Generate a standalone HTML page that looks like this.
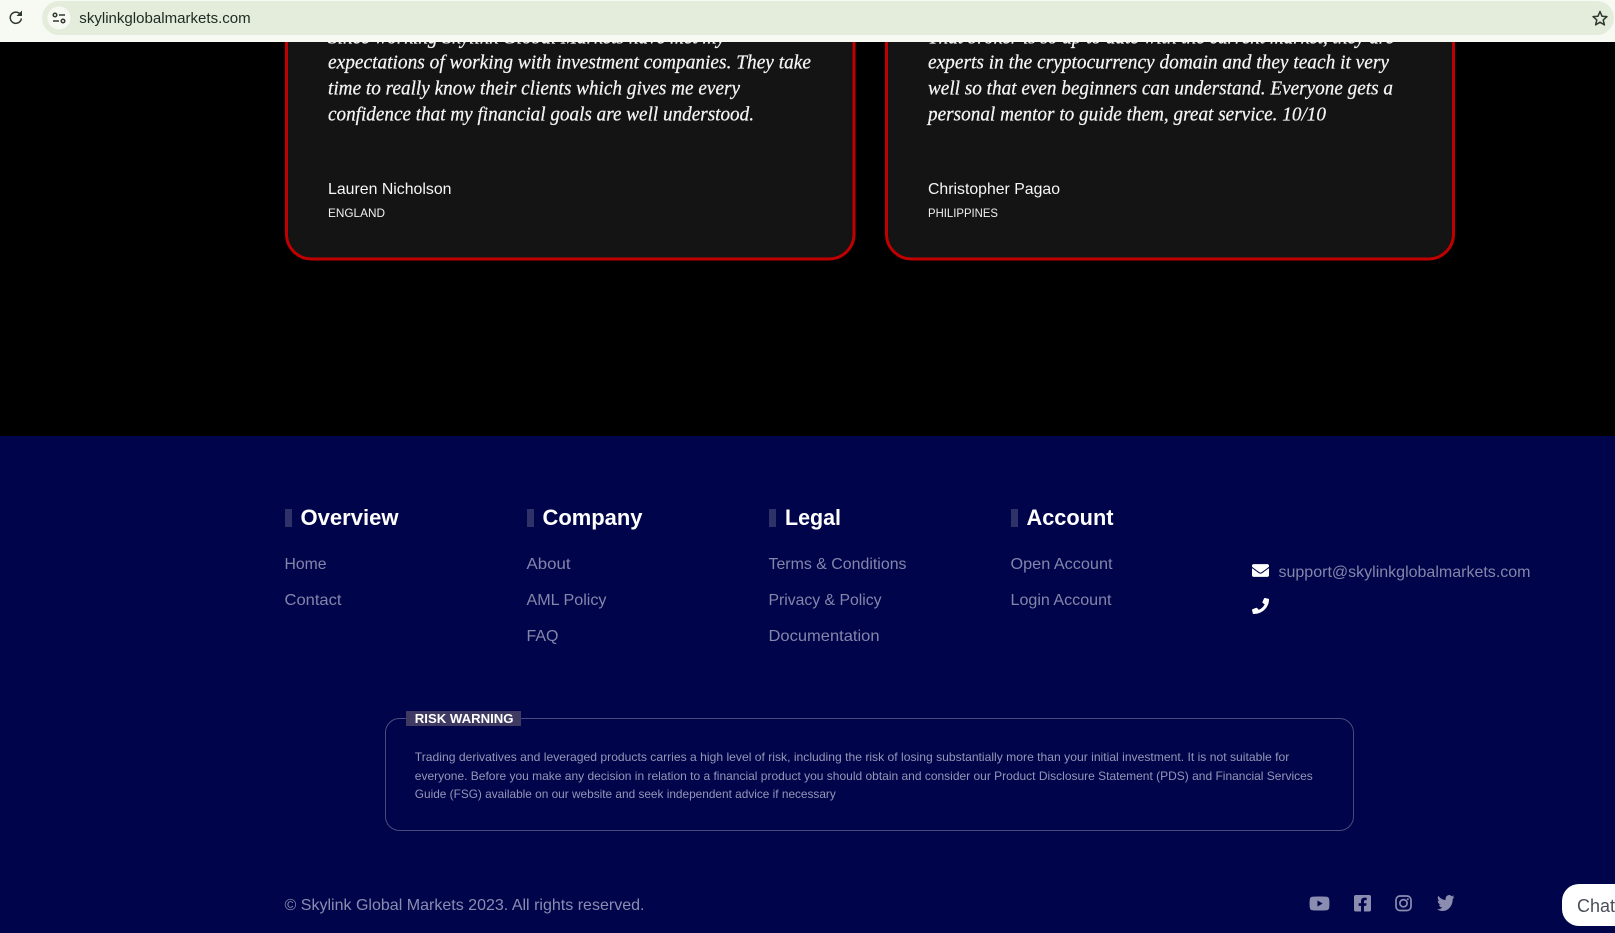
<!DOCTYPE html>
<html lang="en"><head><meta charset="utf-8"><title>Skylink Global Markets</title>
<style>
html,body{margin:0;padding:0;width:1615px;height:933px;overflow:hidden;background:#000}
svg.page{position:absolute;left:0;top:0;display:block}
text{font-family:"Liberation Sans",sans-serif}
.q{font-family:"Liberation Serif",serif;font-style:italic;font-size:20.5px;fill:#f4f4f4;stroke:#f4f4f4;stroke-width:.25px}
.n{font-size:16px;fill:#f6f6f6}
.c{font-size:12px;fill:#f0f0f0}
.h{font-size:22px;font-weight:700;fill:#fff}
.l{font-size:16px;fill:#8485aa}
.r{font-size:12px;fill:#9596b6}
</style></head><body>
<svg class="page" width="1615" height="933" viewBox="0 0 1615 933" xmlns="http://www.w3.org/2000/svg">
<rect width="1615" height="933" fill="#000"/>
<!-- testimonial cards -->
<rect x="286.5" y="-60" width="567.5" height="319" rx="25" fill="#141414" stroke="#c00000" stroke-width="3"/>
<rect x="886.5" y="-60" width="567" height="319" rx="25" fill="#141414" stroke="#c00000" stroke-width="3"/>
<g class="qs">
<text class="q" x="328" y="43.5" textLength="397" lengthAdjust="spacingAndGlyphs">Since working Skylink Global Markets have met my</text>
<text class="q" x="328" y="68.7" textLength="483" lengthAdjust="spacingAndGlyphs">expectations of working with investment companies. They take</text>
<text class="q" x="328" y="94.7" textLength="412" lengthAdjust="spacingAndGlyphs">time to really know their clients which gives me every</text>
<text class="q" x="328" y="120.7" textLength="426" lengthAdjust="spacingAndGlyphs">confidence that my financial goals are well understood.</text>
<text class="q" x="928" y="43.5" textLength="466" lengthAdjust="spacingAndGlyphs">That broker is so up to date with the current market, they are</text>
<text class="q" x="928" y="68.7" textLength="461" lengthAdjust="spacingAndGlyphs">experts in the cryptocurrency domain and they teach it very</text>
<text class="q" x="928" y="94.7" textLength="465" lengthAdjust="spacingAndGlyphs">well so that even beginners can understand. Everyone gets a</text>
<text class="q" x="928" y="120.7" textLength="398" lengthAdjust="spacingAndGlyphs">personal mentor to guide them, great service. 10/10</text>
</g>
<text class="n" x="328" y="194" textLength="123.5" lengthAdjust="spacingAndGlyphs">Lauren Nicholson</text>
<text class="c" x="328" y="217" textLength="57" lengthAdjust="spacingAndGlyphs">ENGLAND</text>
<text class="n" x="928" y="194" textLength="132" lengthAdjust="spacingAndGlyphs">Christopher Pagao</text>
<text class="c" x="928" y="217" textLength="70" lengthAdjust="spacingAndGlyphs">PHILIPPINES</text>

<!-- footer -->
<rect x="0" y="436" width="1615" height="497" fill="#00044a"/>
<g fill="#2e3268">
<rect x="285" y="509" width="7" height="18"/><rect x="527" y="509" width="7" height="18"/>
<rect x="769" y="509" width="7" height="18"/><rect x="1011" y="509" width="7" height="18"/>
</g>
<text class="h" x="300.5" y="525" textLength="98" lengthAdjust="spacingAndGlyphs">Overview</text>
<text class="h" x="542.5" y="525" textLength="100" lengthAdjust="spacingAndGlyphs">Company</text>
<text class="h" x="785" y="525" textLength="56" lengthAdjust="spacingAndGlyphs">Legal</text>
<text class="h" x="1026.5" y="525" textLength="87" lengthAdjust="spacingAndGlyphs">Account</text>

<text class="l" x="284.5" y="569" textLength="42" lengthAdjust="spacingAndGlyphs">Home</text>
<text class="l" x="284.5" y="605" textLength="57" lengthAdjust="spacingAndGlyphs">Contact</text>
<text class="l" x="526.5" y="569" textLength="44" lengthAdjust="spacingAndGlyphs">About</text>
<text class="l" x="526.5" y="605" textLength="80" lengthAdjust="spacingAndGlyphs">AML Policy</text>
<text class="l" x="526.5" y="641" textLength="32" lengthAdjust="spacingAndGlyphs">FAQ</text>
<text class="l" x="768.5" y="569" textLength="138" lengthAdjust="spacingAndGlyphs">Terms &amp; Conditions</text>
<text class="l" x="768.5" y="605" textLength="113" lengthAdjust="spacingAndGlyphs">Privacy &amp; Policy</text>
<text class="l" x="768.5" y="641" textLength="111" lengthAdjust="spacingAndGlyphs">Documentation</text>
<text class="l" x="1010.5" y="569" textLength="102" lengthAdjust="spacingAndGlyphs">Open Account</text>
<text class="l" x="1010.5" y="605" textLength="101" lengthAdjust="spacingAndGlyphs">Login Account</text>
<text class="l" x="1278.5" y="577" textLength="252" lengthAdjust="spacingAndGlyphs">support@skylinkglobalmarkets.com</text>

<svg x="1252" y="562" width="17" height="17" viewBox="0 0 512 512"><path fill="#fff" d="M502.3 190.8c3.9-3.1 9.7-.2 9.7 4.7V400c0 26.5-21.5 48-48 48H48c-26.5 0-48-21.5-48-48V195.6c0-5 5.7-7.8 9.7-4.7 22.4 17.4 52.1 39.5 154.1 113.6 21.1 15.4 56.7 47.8 92.2 47.6 35.7.3 72-32.8 92.3-47.6 102-74.1 131.6-96.3 154-113.7zM256 320c23.2.4 56.6-29.2 73.4-41.4 132.7-96.3 142.8-104.7 173.4-128.7 5.8-4.5 9.2-11.5 9.2-18.9v-19c0-26.5-21.5-48-48-48H48C21.5 64 0 85.5 0 112v19c0 7.4 3.4 14.3 9.2 18.9 30.6 23.9 40.7 32.4 173.4 128.7 16.8 12.2 50.2 41.8 73.4 41.4z"/></svg>
<svg x="1252" y="598" width="17" height="16" viewBox="0 0 512 512" preserveAspectRatio="none"><path fill="#fff" d="M493.4 24.6l-104-24c-11.3-2.6-22.9 3.3-27.5 13.9l-48 112c-4.2 9.8-1.4 21.3 6.9 28l60.6 49.6c-36 76.7-98.9 140.5-177.2 177.2l-49.6-60.6c-6.8-8.3-18.2-11.1-28-6.9l-112 48C3.9 366.5-2 378.1.6 389.4l24 104C27.1 504.2 36.7 512 48 512c256.1 0 464-207.5 464-464 0-11.2-7.7-20.9-18.6-23.4z"/></svg>

<!-- risk warning -->
<rect x="385.5" y="718.5" width="968" height="112" rx="14" fill="none" stroke="#4a4b7c" stroke-width="1"/>
<rect x="406" y="711" width="115" height="15" fill="#3f3a62"/>
<text x="414.8" y="723" font-size="13" font-weight="700" fill="#fff" textLength="98.7" lengthAdjust="spacingAndGlyphs">RISK WARNING</text>
<text class="r" x="414.8" y="761" textLength="874.5" lengthAdjust="spacingAndGlyphs">Trading derivatives and leveraged products carries a high level of risk, including the risk of losing substantially more than your initial investment. It is not suitable for</text>
<text class="r" x="414.8" y="780" textLength="898" lengthAdjust="spacingAndGlyphs">everyone. Before you make any decision in relation to a financial product you should obtain and consider our Product Disclosure Statement (PDS) and Financial Services</text>
<text class="r" x="414.8" y="798" textLength="421" lengthAdjust="spacingAndGlyphs">Guide (FSG) available on our website and seek independent advice if necessary</text>

<!-- bottom bar -->
<text class="l" x="284.5" y="910" textLength="360" lengthAdjust="spacingAndGlyphs" style="fill:#8a8cb0">© Skylink Global Markets 2023. All rights reserved.</text>
<svg x="1309" y="893.5" width="21" height="20" viewBox="0 0 576 512" preserveAspectRatio="xMidYMid meet"><path fill="#8b8db0" d="M549.655 124.083c-6.281-23.65-24.787-42.276-48.284-48.597C458.781 64 288 64 288 64S117.22 64 74.629 75.486c-23.497 6.322-42.003 24.947-48.284 48.597-11.412 42.867-11.412 132.305-11.412 132.305s0 89.438 11.412 132.305c6.281 23.65 24.787 41.5 48.284 47.821C117.22 448 288 448 288 448s170.78 0 213.371-11.486c23.497-6.321 42.003-24.171 48.284-47.821 11.412-42.867 11.412-132.305 11.412-132.305s0-89.438-11.412-132.305zm-317.51 213.508V175.185l142.739 81.205-142.739 81.201z"/></svg>
<svg x="1354" y="895" width="17" height="16.5" viewBox="0 32 448 448" preserveAspectRatio="none"><path fill="#8b8db0" d="M400 32H48A48 48 0 0 0 0 80v352a48 48 0 0 0 48 48h137.25V327.69h-63V256h63v-54.64c0-62.15 37-96.48 93.67-96.48 27.14 0 55.52 4.84 55.52 4.84v61h-31.27c-30.81 0-40.42 19.12-40.42 38.73V256h68.78l-11 71.69h-57.78V480H400a48 48 0 0 0 48-48V80a48 48 0 0 0-48-48z"/></svg>
<g fill="none" stroke="#8b8db0" stroke-width="1.7">
<rect x="1396" y="896" width="15" height="14.5" rx="4"/>
<circle cx="1403.5" cy="903.2" r="3.6"/>
</g>
<circle cx="1407.8" cy="899.2" r="1" fill="#8b8db0"/>
<svg x="1437" y="895" width="17.5" height="16" viewBox="0 48 512 416" preserveAspectRatio="none"><path fill="#8b8db0" d="M459.37 151.716c.325 4.548.325 9.097.325 13.645 0 138.72-105.583 298.558-298.558 298.558-59.452 0-114.68-17.219-161.137-47.106 8.447.974 16.568 1.299 25.34 1.299 49.055 0 94.213-16.568 130.274-44.832-46.132-.975-84.792-31.188-98.112-72.772 6.498.974 12.995 1.624 19.818 1.624 9.421 0 18.843-1.3 27.614-3.573-48.081-9.747-84.143-51.98-84.143-102.985v-1.299c13.969 7.797 30.214 12.67 47.431 13.319-28.264-18.843-46.781-51.005-46.781-87.391 0-19.492 5.197-37.36 14.294-52.954 51.655 63.675 129.3 105.258 216.365 109.807-1.624-7.797-2.599-15.918-2.599-24.04 0-57.828 46.782-104.934 104.934-104.934 30.213 0 57.502 12.67 76.67 33.137 23.715-4.548 46.456-13.32 66.599-25.34-7.798 24.366-24.366 44.833-46.132 57.827 21.117-2.273 41.584-8.122 60.426-16.243-14.292 20.791-32.161 39.308-52.628 54.253z"/></svg>

<!-- chat -->
<rect x="1562" y="884" width="80" height="42" rx="17" fill="#fff"/>
<text x="1577" y="912" font-size="18" fill="#4a4f5a" textLength="38" lengthAdjust="spacingAndGlyphs">Chat</text>

<!-- browser bar -->
<rect x="0" y="0" width="1615" height="42" fill="#f7faf2"/>
<rect x="42" y="1" width="1572" height="34" rx="17" fill="#e4ecdc"/>
<circle cx="59" cy="18" r="11.5" fill="#f7faf2"/>
<g fill="none" stroke="#2f3a30" stroke-width="1.5">
<path d="M21 15.5a5.6 5.6 0 1 0 .4 3"/>
<circle cx="55" cy="15" r="1.8"/><circle cx="63" cy="21" r="1.8"/>
<path d="M59 15h6M53 21h6"/>
</g>
<path d="M22 10.5v5.5h-5.5z" fill="#2f3a30"/>
<text x="79.3" y="23" font-size="14.5" fill="#1f2a22" textLength="171.4" lengthAdjust="spacingAndGlyphs">skylinkglobalmarkets.com</text>
<path d="M1600 11.5l2 4.7 5 .4-3.8 3.3 1.2 5-4.4-2.7-4.4 2.7 1.2-5-3.8-3.3 5-.4z" fill="none" stroke="#2f3a30" stroke-width="1.5" stroke-linejoin="round"/>
</svg>
</body></html>
